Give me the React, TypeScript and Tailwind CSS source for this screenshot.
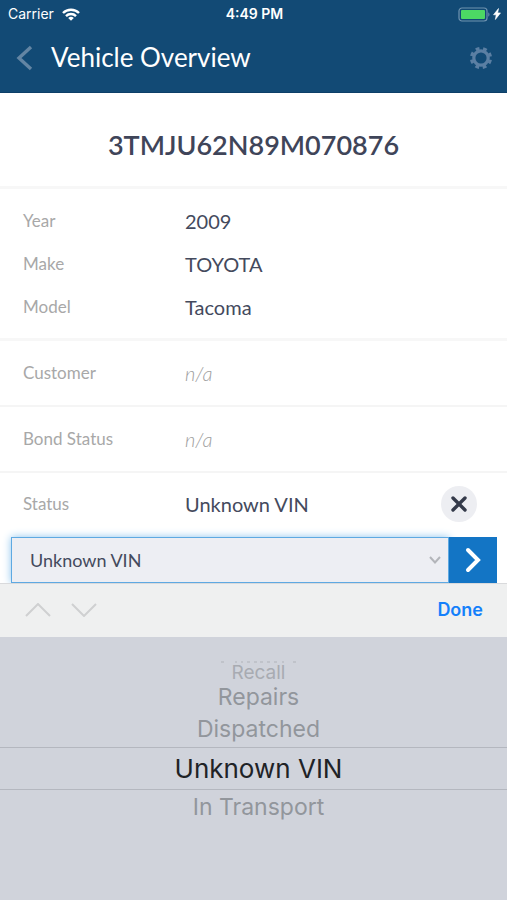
import React from 'react'

const vehicle = [
  { label: 'Year', value: '2009' },
  { label: 'Make', value: 'TOYOTA' },
  { label: 'Model', value: 'Tacoma' },
]

const StatusBar = () => {
  return (
    <div className="grid h-7 grid-cols-3 items-center pl-2 pr-1.5 font-['Inter',sans-serif] text-sm leading-4 text-white">
      <div className="flex items-center gap-2">
        <span>Carrier</span>
        <svg viewBox="0 0 18 13" className="h-[13px] w-[18px]" fill="none" stroke="white" strokeWidth="2.4">
          <path d="M1 5a11.3 11.3 0 0 1 16 0" />
          <path d="M4 8.1a7 7 0 0 1 10 0" />
          <path d="M9 12.8 6.2 10a4 4 0 0 1 5.6 0z" fill="white" stroke="none" />
        </svg>
      </div>
      <span className="text-center font-semibold">4:49 PM</span>
      <div className="flex items-center justify-end gap-[3px]">
        <svg viewBox="0 0 32 15" className="h-[15px] w-8">
          <rect x="1" y="1" width="28" height="13" rx="3" fill="none" stroke="#6f93b0" strokeWidth="1.2" />
          <rect x="3" y="3" width="24" height="9" rx="1" fill="#4cd964" />
          <path d="M30.3 5.3c1.6.8 1.6 3.6 0 4.4z" fill="#6f93b0" />
        </svg>
        <svg viewBox="0 0 8 12" className="h-3 w-2" fill="white" stroke="white" strokeWidth="0.6">
          <path d="M5.5 0.5 0.5 6.8h2.7L2.4 11.5 7.5 4.9H4.7z" />
        </svg>
      </div>
    </div>
  )
}

const Header = () => {
  return (
    <header className="border-b border-[#0d3f68] bg-[#124a75]">
      <StatusBar />
      <div className="flex h-16 items-center pb-1 pl-4 pr-3.5">
        <button type="button" aria-label="Back" className="flex w-[35px]">
          <svg viewBox="0 0 18 28" className="h-7 w-[18px]" fill="none" stroke="#6385a3" strokeWidth="3.4">
            <path d="M15 3 3 14l12 11" />
          </svg>
        </button>
        <h1 className="flex-1 pb-0.5 text-[26px] leading-8 text-white">Vehicle Overview</h1>
        <button type="button" aria-label="Settings">
          <svg viewBox="0 0 24 24" className="size-6" fill="none" stroke="#5b7fa3">
            <circle cx="12" cy="12" r="7.2" strokeWidth="3.2" />
            <circle cx="12" cy="12" r="9.6" strokeWidth="3" strokeDasharray="3.8 3.74" strokeDashoffset="-1.87" />
          </svg>
        </button>
      </div>
    </header>
  )
}

const Row = ({ label, value }: { label: string; value?: string }) => {
  return (
    <div className="flex min-h-[43px] flex-1 items-center pl-[23px]">
      <dt className="w-[162px] text-[17px] text-[#a8a8a8]">{label}</dt>
      {value ? (
        <dd className="text-xl text-[#444a5d]">{value}</dd>
      ) : (
        <dd className="text-xl font-light italic text-[#a0a0a0]">n/a</dd>
      )}
    </div>
  )
}

const StatusForm = () => {
  return (
    <form className="flex h-[46px] pl-[11px] pr-2.5">
      <div className="relative flex-1">
        <select
          aria-label="Status"
          defaultValue="Unknown VIN"
          className="h-full w-full appearance-none border border-[#5ea9e2] bg-[#edeef3] pl-[18px] text-lg text-[#444a5d] shadow-[0_0_8px_#8cc4ee] outline-none"
        >
          <option>Recall</option>
          <option>Repairs</option>
          <option>Dispatched</option>
          <option>Unknown VIN</option>
          <option>In Transport</option>
        </select>
        <svg
          viewBox="0 0 12 8"
          className="pointer-events-none absolute right-2 top-[19px] h-2 w-3"
          fill="none"
          stroke="#b3b5ba"
          strokeWidth="2"
        >
          <path d="m1 1 5 5.5 5-5.5" />
        </svg>
      </div>
      <button type="submit" aria-label="Save status" className="relative flex w-12 items-center justify-center bg-[#1375c5]">
        <svg viewBox="0 0 16 26" className="h-[26px] w-4" fill="none" stroke="white" strokeWidth="4" strokeLinecap="round">
          <path d="m3 3 10 10L3 23" />
        </svg>
      </button>
    </form>
  )
}

const Picker = () => {
  return (
    <section className="flex flex-1 flex-col bg-[#d0d3db] font-['Inter',sans-serif]">
      <div className="relative flex h-[54px] items-center gap-5 border-t border-[#d9dadc] bg-[#eff0f0] pb-0.5 pl-[25px] pr-6">
        <button type="button" aria-label="Previous field">
          <svg viewBox="0 0 26 14" className="h-3.5 w-[26px]" fill="none" stroke="#cfd0d1" strokeWidth="2">
            <path d="M1 13 13 1l12 12" />
          </svg>
        </button>
        <button type="button" aria-label="Next field">
          <svg viewBox="0 0 26 14" className="h-3.5 w-[26px]" fill="none" stroke="#cfd0d1" strokeWidth="2">
            <path d="m1 1 12 12L25 1" />
          </svg>
        </button>
        <button type="button" className="ml-auto text-lg font-semibold text-[#1480fb]">
          Done
        </button>
      </div>
      <ul className="flex flex-col pt-[23px] text-center text-[#92969c]">
        {/* last item before the wheel turns out of sight */}
        <li aria-hidden="true" className="flex justify-center pl-2.5">
          <svg viewBox="0 0 78 4" className="h-1 w-[78px]" stroke="#bbbec5" strokeWidth="1.5">
            <path d="M1 2h3M15 2h2M21 2h2M27 2h3M34 2h3M40 2h3M47 2h3M54 2h3M62 2h2M73 2h3" />
          </svg>
        </li>
        <li className="pl-2.5 text-[19px] leading-[18px] text-[#a8abb2]">Recall</li>
        <li className="pl-2.5 text-[23px] leading-[30px]">Repairs</li>
        <li className="pl-2.5 text-[23px] leading-[35px]">Dispatched</li>
        <li className="border-y border-[#b4b7bf] pl-2.5 text-[26px] leading-[41px] text-[#202226]">Unknown VIN</li>
        <li className="pl-2.5 text-[23px] leading-[35px]">In Transport</li>
      </ul>
    </section>
  )
}

export default function App() {
  return (
    <div className="flex min-h-screen flex-col bg-white font-['Lato',sans-serif]">
      <Header />
      <h2 className="border-b-3 border-[#f7f7f7] pb-[25px] pt-9 text-center text-[27px] font-semibold leading-8 text-[#3f4559]">
        3TMJU62N89M070876
      </h2>
      <dl>
        <div className="border-b-3 border-[#f7f7f7] py-2.5">
          {vehicle.map((item) => (
            <Row key={item.label} label={item.label} value={item.value} />
          ))}
        </div>
        <div className="flex h-[66px] border-b-2 border-[#f5f5f5]">
          <Row label="Customer" />
        </div>
        <div className="flex h-[66px] border-b-2 border-[#f5f5f5]">
          <Row label="Bond Status" />
        </div>
        <div className="flex h-16 items-center pb-0.5 pr-[30px]">
          <Row label="Status" value="Unknown VIN" />
          <button type="button" aria-label="Cancel" className="flex size-9 items-center justify-center rounded-full bg-[#edeef2]">
            <svg viewBox="0 0 16 16" className="size-4" fill="none" stroke="#343a4a" strokeWidth="3.4" strokeLinecap="round">
              <path d="m2 2 12 12M14 2 2 14" />
            </svg>
          </button>
        </div>
      </dl>
      <StatusForm />
      <Picker />
    </div>
  )
}
